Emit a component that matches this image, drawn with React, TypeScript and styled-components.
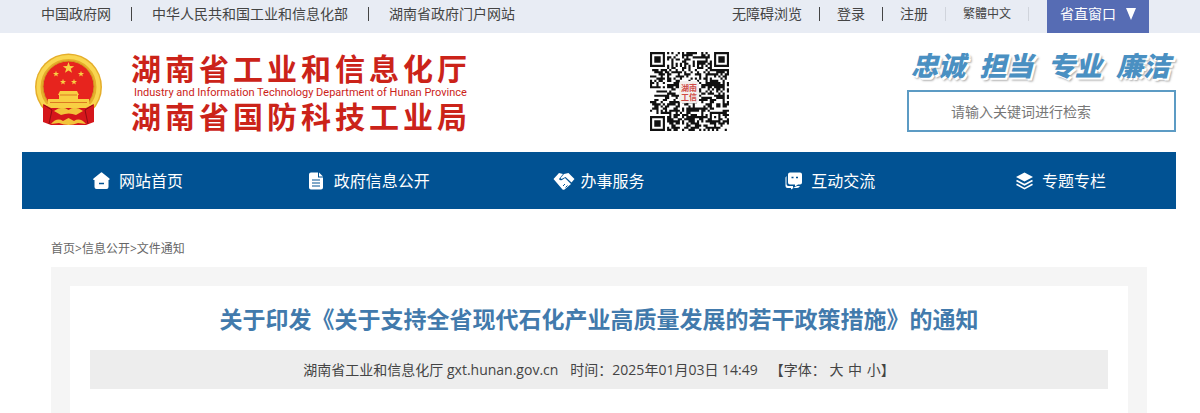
import React from "react";
import styled, { createGlobalStyle } from "styled-components";

const GlobalStyle = createGlobalStyle`
  * { box-sizing: border-box; }
  body {
    margin: 0;
    background: #fff;
    color: #444;
    font-family: "Open Sans", "Noto Sans CJK SC", sans-serif;
    font-size: 14px;
    line-height: 20px;
  }
  a { color: inherit; text-decoration: none; }
  button, input { font: inherit; }
`;

const Page = styled.div`
  display: flex;
  flex-direction: column;
  min-height: 100vh;
`;

const TopBar = styled.div`
  display: flex;
  justify-content: space-between;
  align-items: flex-start;
  height: 33px;
  padding: 0 51px 0 41px;
  background: #e8ecf4;
  white-space: nowrap;
`;

const LinkGroup = styled.nav<{ $gap: number }>`
  display: flex;
  align-items: center;
  gap: ${(p) => p.$gap}px;
  height: 28px;
`;

const TopLink = styled.a<{ $small?: boolean }>`
  font-size: ${(p) => (p.$small ? 12 : 14)}px;
`;

const Divider = styled.span<{ $faint?: boolean }>`
  width: 1px;
  height: 14px;
  background: ${(p) => (p.$faint ? "#d0d4dc" : "#444")};
`;

const TopRight = styled.div`
  display: flex;
  gap: 18px;
`;

const WindowButton = styled.button`
  display: flex;
  align-items: center;
  gap: 10px;
  height: 33px;
  padding: 0 13px 5px;
  border: 0;
  background: #566cb4;
  color: #fff;
`;

const Header = styled.header`
  display: flex;
  justify-content: space-between;
  align-items: flex-start;
  height: 119px;
  padding: 19px 24px 0 34px;
`;

const Brand = styled.a`
  display: flex;
  gap: 28px;
`;

const BrandText = styled.div`
  display: flex;
  flex-direction: column;
  color: #cb2319;
  white-space: nowrap;
`;

const BrandName = styled.strong`
  font-size: 30px;
  font-weight: 700;
  line-height: 34px;
  letter-spacing: 4px;
`;

const BrandEnglish = styled.span`
  padding-left: 3px;
  font-family: Roboto, sans-serif;
  font-size: 11px;
  line-height: 14px;
`;

const SearchArea = styled.form`
  display: flex;
  flex-direction: column;
  width: 269px;
`;

const Slogan = styled.div`
  display: flex;
  justify-content: space-between;
  padding: 0 6px 0 4px;
  color: #4a90c2;
  font-size: 27px;
  font-style: italic;
  font-weight: 900;
  line-height: 27px;
  text-shadow: 2px 2px 0 #fff, 3px 3px 2px #aaa;
`;

const SearchInput = styled.input`
  width: 100%;
  height: 42px;
  margin-top: 11px;
  padding: 0 42px;
  border: 2px solid #5c9bc4;
  background: #fff;
  color: #444;
  &::placeholder { color: #777; opacity: 1; }
`;

const MainNav = styled.nav`
  display: grid;
  grid-template-columns: repeat(5, 1fr);
  height: 57px;
  margin: 0 24px 0 22px;
  background: #015293;
`;

const NavItem = styled.a`
  display: flex;
  align-items: center;
  justify-content: center;
  gap: 4px;
  color: #fff;
  font-size: 16px;
  line-height: 24px;
`;

const Breadcrumb = styled.nav`
  padding: 30px 51px 8px;
  color: #666;
  font-size: 12px;
`;

const ArticleFrame = styled.main`
  display: flex;
  flex: 1;
  margin: 0 53px 0 51px;
  padding: 19px 19px 0;
  background: #f5f5f5;
`;

const Article = styled.article`
  flex: 1;
  padding: 16px 20px 24px;
  background: #fff;
  text-align: center;
`;

const Title = styled.h1`
  margin: 0;
  color: #427aac;
  font-size: 23px;
  font-weight: 700;
  line-height: 34px;
`;

const Meta = styled.div`
  display: flex;
  align-items: center;
  justify-content: center;
  gap: 12px;
  height: 39px;
  margin-top: 14px;
  background: #ededed;
  white-space: nowrap;
`;

const SizeButton = styled.button`
  padding: 0;
  margin-right: 1px;
  border: 0;
  background: none;
  color: inherit;
  &:last-of-type { margin-right: 0; }
`;

const star = (cx: number, cy: number, r: number) =>
  Array.from({ length: 10 }, (_, i) => {
    const a = (Math.PI / 5) * i - Math.PI / 2;
    const d = i % 2 ? r * 0.4 : r;
    return `${(cx + d * Math.cos(a)).toFixed(2)},${(cy + d * Math.sin(a)).toFixed(2)}`;
  }).join(" ");

const Emblem = () => (
  <svg width="69" height="76" viewBox="0 0 69 76" role="img" aria-label="国徽">
    <circle cx="34.5" cy="35" r="33.5" fill="#e5ae2b" />
    <circle cx="34.5" cy="35" r="30" fill="none" stroke="#f9d650" strokeWidth="4" />
    <circle cx="34.5" cy="34.5" r="25.5" fill="#e7241e" stroke="#d39a22" />
    <g fill="#f8cf43">
      <polygon points={star(34.5, 16, 6)} />
      <polygon points={star(22, 22, 3.2)} />
      <polygon points={star(47, 22, 3.2)} />
      <polygon points={star(29, 30, 3.2)} />
      <polygon points={star(40, 30, 3.2)} />
      <path d="M26 39h17l2 4h-1v4h11v5h3l-4 5H15l-4-5h3v-5h11v-4h-1z" />
    </g>
    <path d="M26 43h17M16 50.5h37" stroke="#dc7a22" />
    <path d="M9 52l8 4h35l8-4v18l-8 3H17l-8-3z" fill="#d5161b" />
    <path d="M20 59q8-6 14.500-1 6.500-5 14.500 1l-7 4q-7-3-15 0z" fill="#f2c33a" />
    <path d="M17 72q6-7 12-3l5.500-3 5.500 3q6-4 12 3l-8-1q-9.500 4-19 0z" fill="#f2c33a" />
    <path d="M10 53l8 5-3 14M59 53l-8 5 3 14" fill="none" stroke="#8f0c12" />
  </svg>
);

const QR_SIZE = 37;

/* Dark modules of the code: three finders, one alignment mark, timing lines and data. */
const qrPath = (() => {
  let seed = 20250103;
  const random = () => {
    seed = (seed * 1103515245 + 12345) % 2147483648;
    return seed / 2147483648;
  };
  const ring = (x: number, y: number, cx: number, cy: number) =>
    Math.max(Math.abs(x - cx), Math.abs(y - cy));
  let d = "";
  for (let y = 0; y < QR_SIZE; y++) {
    for (let x = 0; x < QR_SIZE; x++) {
      let dark = random() > 0.48;
      if (x === 6 || y === 6) dark = (x + y) % 2 === 0;
      const finder = Math.min(ring(x, y, 3, 3), ring(x, y, 33, 3), ring(x, y, 3, 33));
      if (finder <= 4) dark = finder !== 2 && finder !== 4;
      const mark = ring(x, y, 30, 30);
      if (mark <= 2) dark = mark !== 1;
      if (dark) d += `M${x} ${y}h1v1h-1z`;
    }
  }
  return d;
})();

const QrFigure = styled.div`
  display: grid;
  place-items: center;
  & > * { grid-area: 1 / 1; }
`;

const QrLabel = styled.span`
  padding: 2px;
  border-radius: 3px;
  background: #f3efed;
  color: #cf4a45;
  font-size: 8px;
  font-weight: 700;
  line-height: 9px;
  text-align: center;
`;

const QrCode = () => (
  <QrFigure>
    <svg width="79" height="79" viewBox="0 0 37 37" role="img" aria-label="二维码">
      <path d={qrPath} fill="#111" />
    </svg>
    <QrLabel>湖南<br />工信</QrLabel>
  </QrFigure>
);

const NavIcon = ({ children }: { children: React.ReactNode }) => (
  <svg width="23" height="18" viewBox="0 0 23 18" fill="#fff" aria-hidden="true">
    {children}
  </svg>
);

const navItems = [
  {
    label: "网站首页",
    icon: (
      <>
        <path d="M9 0.500 Q9.500 0 10 0.500 L17.500 6.500 Q18 8 16.500 8 V15 Q16.500 17 14.500 17 H4.500 Q2.500 17 2.500 15 V8 Q0.500 8 1.500 6.500Z" />
        <path d="M7 11.500h5" stroke="#015293" strokeWidth="1.500" />
      </>
    ),
  },
  {
    label: "政府信息公开",
    icon: (
      <>
        <path d="M4 0.500h7v5h5v10q0 2-2 2H4q-2 0-2-2v-13q0-2 2-2z" />
        <path d="M12 0.500l4 4h-4z" />
        <path d="M5 8h8M5 11h8M5 14h8" stroke="#015293" />
      </>
    ),
  },
  {
    label: "办事服务",
    icon: (
      <>
        <path d="M0.500 7L6 1l4 1-4 5q1 2 3 1l3-2 6 6-6.500 5.500q-1 .5-2 0z" />
        <path d="M11 2l4.500-1L21.500 7 18.500 10.500 12.500 5l-4 2-1-1z" />
        <path d="M10 14l2-2M12.500 15.500l2-2" stroke="#015293" />
      </>
    ),
  },
  {
    label: "互动交流",
    icon: (
      <>
        <path d="M6 0.500h10q2 0 2 2v8q0 2-2 2h-2l-3 2v-2H6q-2 0-2-2v-8q0-2 2-2z" />
        <path d="M2.500 4v8q0 2 2 2h4.500v2l4-2h3q-1 2-3 2H9.500L7 17.500V16H3.500q-2 0-2-2V5.500z" />
        <path d="M7.500 5.500h2M12 5.500h2" stroke="#015293" strokeWidth="1.500" />
      </>
    ),
  },
  {
    label: "专题专栏",
    icon: (
      <>
        <path d="M9.500 0.500L18 5 9.500 9.500 1 5z" />
        <path d="M1.500 8.500l8 4.300 8-4.300M1.500 12.300l8 4.300 8-4.300" fill="none" stroke="#fff" strokeWidth="1.600" />
      </>
    ),
  },
];

export default function App() {
  return (
    <Page>
      <GlobalStyle />
      <TopBar>
        <LinkGroup $gap={20} aria-label="相关网站">
          <TopLink href="#">中国政府网</TopLink>
          <Divider />
          <TopLink href="#">中华人民共和国工业和信息化部</TopLink>
          <Divider />
          <TopLink href="#">湖南省政府门户网站</TopLink>
        </LinkGroup>
        <TopRight>
          <LinkGroup $gap={17} aria-label="用户">
            <TopLink href="#">无障碍浏览</TopLink>
            <Divider />
            <TopLink href="#">登录</TopLink>
            <Divider />
            <TopLink href="#">注册</TopLink>
            <Divider $faint />
            <TopLink href="#" $small>繁體中文</TopLink>
            <Divider $faint />
          </LinkGroup>
          <WindowButton type="button">
            省直窗口
            <svg width="10" height="12" viewBox="0 0 10 12" fill="#fff" aria-hidden="true">
              <path d="M0 0h10L5 12z" />
            </svg>
          </WindowButton>
        </TopRight>
      </TopBar>

      <Header>
        <Brand href="#">
          <Emblem />
          <BrandText>
            <BrandName>湖南省工业和信息化厅</BrandName>
            <BrandEnglish>Industry and Information Technology Department of Hunan Province</BrandEnglish>
            <BrandName>湖南省国防科技工业局</BrandName>
          </BrandText>
        </Brand>
        <QrCode />
        <SearchArea>
          <Slogan>
            <span>忠诚</span>
            <span>担当</span>
            <span>专业</span>
            <span>廉洁</span>
          </Slogan>
          <SearchInput type="text" aria-label="检索" placeholder="请输入关键词进行检索" />
        </SearchArea>
      </Header>

      <MainNav aria-label="主导航">
        {navItems.map((item) => (
          <NavItem href="#" key={item.label}>
            <NavIcon>{item.icon}</NavIcon>
            {item.label}
          </NavItem>
        ))}
      </MainNav>

      <Breadcrumb aria-label="当前位置">
        <a href="#">首页</a>&gt;<a href="#">信息公开</a>&gt;<a href="#">文件通知</a>
      </Breadcrumb>

      <ArticleFrame>
        <Article>
          <Title>关于印发《关于支持全省现代石化产业高质量发展的若干政策措施》的通知</Title>
          <Meta>
            <span>湖南省工业和信息化厅 gxt.hunan.gov.cn</span>
            <span>时间：2025年01月03日 14:49</span>
            <span>
              【字体： <SizeButton type="button">大</SizeButton>{" "}
              <SizeButton type="button">中</SizeButton>{" "}
              <SizeButton type="button">小</SizeButton>】
            </span>
          </Meta>
        </Article>
      </ArticleFrame>
    </Page>
  );
}
